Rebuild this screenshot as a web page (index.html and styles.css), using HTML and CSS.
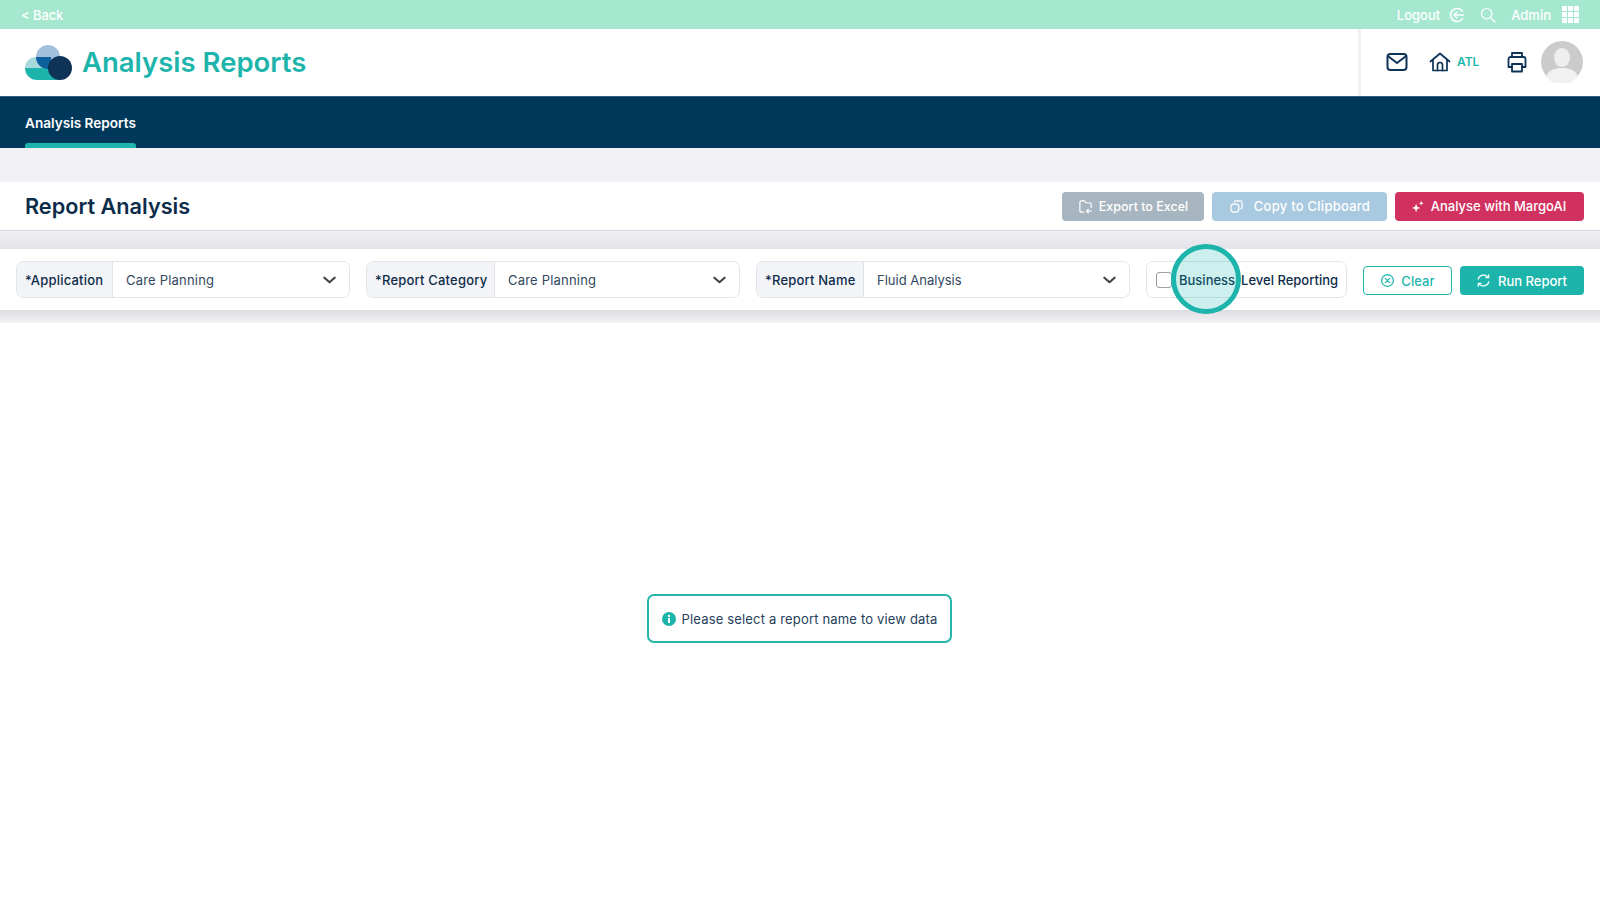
FILE: index.html
```html
<!DOCTYPE html>
<html lang="en">
<head>
<meta charset="utf-8">
<title>Analysis Reports</title>
<link rel="stylesheet" href="styles.css">
</head>
<body>
<div class="topbar">
  <a class="back">&lt; Back</a>
  <div class="top-right">
    <span>Logout</span>
    <svg class="ic-logout" viewBox="0 0 16 16"><path d="M13.5 4.2A6.6 6.6 0 1 0 13.5 11.8" /><path d="M14.5 8H5.2M8 5 5 8l3 3"/></svg>
    <svg class="ic-search" viewBox="0 0 16 16"><circle cx="6.7" cy="6.7" r="5.2"/><path d="m10.6 10.6 4.4 4.4"/></svg>
    <span class="admin">Admin</span>
    <div class="apps"><i></i><i></i><i></i><i></i><i></i><i></i><i></i><i></i><i></i></div>
  </div>
</div>
<header class="header">
  <div class="brand">
    <svg class="logo" viewBox="0 0 48 35">
      <path d="M0 23a11 11 0 0 1 11-11h14v11z" fill="#a9d8dc"/>
      <path d="M0 23h34v12H12A12 12 0 0 1 0 23z" fill="#1db5ab"/>
      <circle cx="23" cy="12" r="12" fill="#a3bfdc"/>
      <path d="M11 12a12 12 0 0 0 15 11.600V12z" fill="#0d5f9e"/>
      <circle cx="35" cy="23" r="12" fill="#0d3357"/>
    </svg>
    <h1>Analysis Reports</h1>
  </div>
  <div class="tools">
    <svg class="ic-mail" viewBox="0 0 22 20"><rect x="1.500" y="2" width="19" height="16" rx="3"/><path d="m2.500 4.500 8.500 6.500 8.500-6.500"/></svg>
    <svg class="ic-home" viewBox="0 0 22 20"><path d="M1.500 9.500 11 1.500l9.500 8M4 8v10.500h14V8"/><path d="M8.500 18.500v-5.500a2.500 2.500 0 0 1 5 0v5.500"/></svg>
    <span class="atl">ATL</span>
    <svg class="ic-print" viewBox="0 0 22 22"><path d="M6 6V2h10v4M6 16H2.500V8a2 2 0 0 1 2-2h13a2 2 0 0 1 2 2v8H16"/><rect x="6" y="13" width="10" height="7.500"/></svg>
    <svg class="avatar" viewBox="0 0 42 42"><circle cx="21" cy="21" r="21" fill="#cbcbcb"/><ellipse cx="21" cy="16.500" rx="8" ry="9.500" fill="#eee"/><path d="M5 36c2-7 9-9 16-9s14 2 16 9a21 21 0 0 1-32 0z" fill="#f1f1f1"/></svg>
  </div>
</header>
<nav class="nav"><a class="tab"><span class="tab-label">Analysis Reports</span></a></nav>
<div class="band"></div>
<section class="title-bar">
  <h2>Report Analysis</h2>
  <div class="actions">
    <button class="btn grey">
      <svg viewBox="0 0 16 16"><path d="M6 14H3.500A1.500 1.500 0 0 1 2 12.500v-9A1.500 1.500 0 0 1 3.500 2H7l1.500 2h4A1.500 1.500 0 0 1 14 5.500V9"/><path d="M14 13H9M11 11l-2 2 2 2"/></svg>Export to Excel</button>
    <button class="btn pale">
      <svg viewBox="0 0 16 16"><rect x="2" y="5.500" width="8.500" height="8.500" rx="3"/><path d="M5.500 3.500A2 2 0 0 1 7.500 2H12a2 2 0 0 1 2 2v4.500a2 2 0 0 1-1.500 2"/></svg>Copy to Clipboard</button>
    <button class="btn red">
      <svg class="solid" viewBox="0 0 16 16"><path d="M6.500 5 7.700 8.300 11 9.500 7.700 10.700 6.500 14 5.300 10.700 2 9.500 5.300 8.300zM12 2l.7 1.800L14.500 4.500l-1.800.7L12 7l-.7-1.800L9.500 4.500l1.800-.7z"/></svg>Analyse with MargoAI</button>
  </div>
</section>
<div class="gap"></div>
<section class="filters">
  <div class="field f1"><label>*Application</label><span class="val">Care Planning</span><svg class="chev" viewBox="0 0 14 8"><path d="m1.500 1.500 5.500 5 5.500-5"/></svg></div>
  <div class="field f2"><label>*Report Category</label><span class="val">Care Planning</span><svg class="chev" viewBox="0 0 14 8"><path d="m1.500 1.500 5.500 5 5.500-5"/></svg></div>
  <div class="field f3"><label>*Report Name</label><span class="val">Fluid Analysis</span><svg class="chev" viewBox="0 0 14 8"><path d="m1.500 1.500 5.500 5 5.500-5"/></svg></div>
  <div class="check"><span class="box"></span><span>Business-Level Reporting</span><span class="spot"></span></div>
  <div class="run-actions">
    <button class="btn outline"><svg viewBox="0 0 16 16"><circle cx="8" cy="8" r="6.300"/><path d="m5.700 5.700 4.600 4.600m0-4.600-4.600 4.600"/></svg>Clear</button>
    <button class="btn teal"><svg viewBox="0 0 16 16"><path d="M2.300 6.500A6 6 0 0 1 12.800 4.500M13.700 9.500A6 6 0 0 1 3.200 11.500"/><path d="M13.500 2v3h-3M2.500 14v-3h3"/></svg>Run Report</button>
  </div>
</section>
<div class="band2"></div>
<main class="content">
  <div class="notice">
    <svg viewBox="0 0 14 14"><circle cx="7" cy="7" r="7" fill="#1db5ab"/><rect x="6" y="6" width="2" height="5" fill="#fff"/><rect x="6" y="3" width="2" height="2" fill="#fff"/></svg>
    <span>Please select a report name to view data</span>
  </div>
</main>
</body>
</html>
```
FILE: styles.css
```css
* { box-sizing: border-box; }
html, body { margin: 0; height: 100%; }
body {
  font-family: "Inter", "Open Sans", sans-serif;
  color: #0d2c4a;
  background: #fff;
  width: 1600px;
  height: 900px;
  overflow: hidden;
  display: flex;
  flex-direction: column;
}
svg { display: block; fill: none; stroke: currentColor; stroke-linecap: round; stroke-linejoin: round; flex: none; }

.topbar {
  height: 29px;
  background: #a6e8cf;
  color: #fff;
  display: flex;
  align-items: center;
  justify-content: space-between;
  padding: 0 21px 0 21px;
  font-size: 13px;
  font-weight: 500;
}
.back { letter-spacing: -0.1px; }
.top-right { display: flex; align-items: center; }
.ic-logout { width: 16px; height: 16px; stroke-width: 1.500; margin-left: 9px; }
.ic-search { width: 16px; height: 16px; stroke-width: 1.200; margin-left: 15px; }
.admin { margin-left: 15px; }
.apps { display: grid; grid-template-columns: repeat(3, 5px); grid-auto-rows: 5px; gap: 1px; margin-left: 11px; }
.apps i { background: #fff; display: block; }

.header {
  height: 67px;
  display: flex;
  justify-content: space-between;
  align-items: stretch;
  padding-left: 25px;
}
.brand { display: flex; align-items: center; gap: 9px; }
.logo { width: 48px; height: 35px; stroke: none; }
.logo * { stroke: none; }
.brand h1 { margin: 0 0 2px; font-size: 27.5px; font-weight: 600; color: #1db5ab; letter-spacing: 0; }
.tools {
  width: 242px;
  border-left: 3px solid #f0f0f5;
  display: flex;
  align-items: center;
  color: #0d3357;
  padding: 0 0 2px 25px;
}
.ic-mail { width: 22px; height: 20px; stroke-width: 2; }
.ic-home { width: 22px; height: 20px; stroke-width: 1.700; margin-left: 21px; }
.atl { color: #1db5ab; font-size: 12px; font-weight: 600; margin-left: 6px; width: 27px; }
.ic-print { width: 22px; height: 22px; stroke-width: 1.800; margin-left: 22px; }
.avatar { width: 42px; height: 42px; stroke: none; margin-left: 13px; }
.avatar * { stroke: none; }

.nav { height: 52px; background: #00385c; padding-left: 25px; border-top: 1px solid #33607d; }
.tab {
  display: inline-flex;
  flex-direction: column;
  height: 51px;
  color: #fff;
  font-size: 13.6px;
  font-weight: 600;
}
.tab-label { flex: 1; padding-top: 18px; }
.tab::after { content: ""; height: 5px; background: #1db5ab; border-radius: 3px 3px 0 0; }

.band { height: 34px; background: #f0f0f5; }
.title-bar {
  height: 49px;
  background: #fff;
  border-bottom: 1px solid #d5d5de;
  display: flex;
  align-items: center;
  justify-content: space-between;
  padding: 0 16px 0 25px;
}
.title-bar h2 { margin: 0; font-size: 21.7px; font-weight: 600; color: #0d2c4a; }
.actions { display: flex; gap: 8px; }
.btn {
  height: 29px;
  border: 0;
  border-radius: 4px;
  font: 500 13px "Inter", sans-serif;
  color: #fff;
  display: flex;
  align-items: center;
  justify-content: center;
  gap: 7px;
  padding: 0;
}
.btn svg { width: 15px; height: 15px; stroke-width: 1.300; }
.btn svg.solid { fill: #fff; stroke: none; }
.grey { width: 142px; background: #a6b5c0; font-size: 12.5px; gap: 6px; }
.pale { width: 175px; background: #a8c9e0; gap: 10px; letter-spacing: 0.25px; }
.red { width: 189px; background: #d1315f; padding-right: 3px; gap: 6px; }

.gap { height: 18px; background: linear-gradient(#f0f0f5, #e2e2e8); }
.filters {
  height: 61px;
  background: #fff;
  display: flex;
  align-items: center;
  gap: 16px;
  padding: 0 16px;
}
.field {
  height: 37px;
  border: 1px solid #e3e5ea;
  border-radius: 7px;
  display: flex;
  align-items: center;
  font-size: 13px;
  overflow: hidden;
  flex: none;
}
.f1 { width: 334px; }
.f2 { width: 374px; }
.f3 { width: 374px; }
.field label {
  height: 100%;
  background: #f3f4f7;
  border-right: 1px solid #e0e2e8;
  display: flex;
  align-items: center;
  padding: 0 8px;
  font-weight: 500;
  flex: none;
  letter-spacing: 0.2px;
  white-space: nowrap;
}
.f1 label { width: 96px; }
.f2 label { width: 128px; }
.f3 label { width: 107px; }
.val { flex: 1; padding-left: 13px; color: #33485f; letter-spacing: 0.2px; }
.f3 .val { letter-spacing: 0; }
.chev { width: 13px; height: 8px; stroke-width: 2.300; color: #444; margin-right: 13px; }
.check {
  position: relative;
  width: 201px;
  height: 37px;
  border: 1px solid #e3e5ea;
  border-radius: 7px;
  display: flex;
  align-items: center;
  gap: 7px;
  padding-left: 9px;
  font-size: 13px;
  font-weight: 500;
  flex: none;
  white-space: nowrap;
}
.box { width: 16px; height: 16px; border: 1px solid #9aa0a8; border-radius: 3px; flex: none; }
.spot {
  position: absolute;
  left: 24px;
  top: -18px;
  width: 70px;
  height: 70px;
  border-radius: 50%;
  border: 5px solid #1db5ab;
  background: rgba(29, 181, 171, 0.22);
}
.run-actions { display: flex; gap: 8px; margin-left: auto; padding-top: 2px; }
.outline { width: 89px; background: #fff; color: #1db5ab; border: 1px solid #1db5ab; gap: 6px; letter-spacing: 0.1px; }
.teal { width: 124px; background: #1db5ab; padding-right: 1px; }
.band2 { height: 13px; background: linear-gradient(#dcdce2, #f3f3f7); }

.content { flex: 1; display: flex; justify-content: center; padding: 271px 2px 0 0; }
.notice {
  width: 305px;
  height: 49px;
  border: 2px solid #26b5ab;
  border-radius: 7px;
  display: flex;
  align-items: center;
  gap: 6px;
  padding-left: 13px;
  font-size: 13px;
  letter-spacing: 0.17px;
  color: #24405c;
  white-space: nowrap;
}
.notice svg { width: 14px; height: 14px; stroke: none; }
.notice svg * { stroke: none; }
```
